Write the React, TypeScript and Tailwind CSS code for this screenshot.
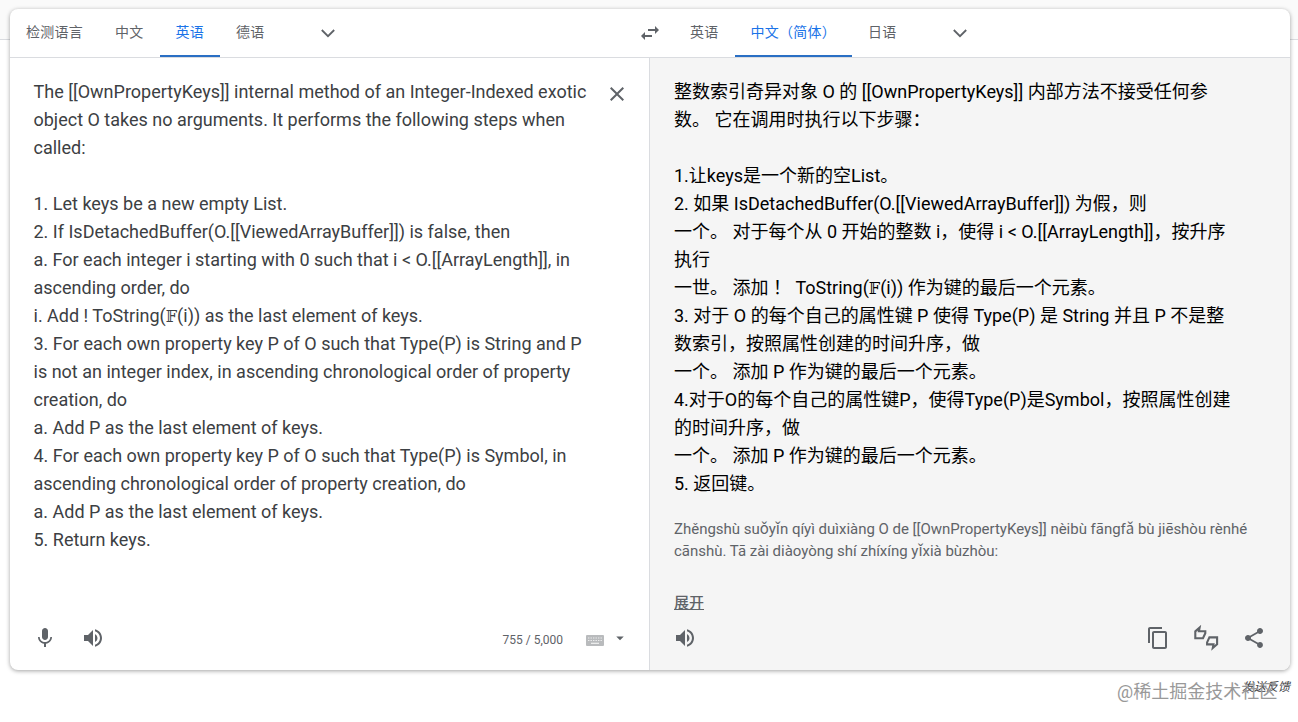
import type { ReactNode } from 'react';
import {
  MdArrowDropDown,
  MdClose,
  MdContentCopy,
  MdMic,
  MdShare,
  MdSwapHoriz,
  MdVolumeUp,
} from 'react-icons/md';

const fieldSymbol = <span className="font-['DejaVu_Serif',serif] text-base leading-none">𝔽</span>;

const sourceLines: ReactNode[] = [
  'The [[OwnPropertyKeys]] internal method of an Integer-Indexed exotic',
  'object O takes no arguments. It performs the following steps when',
  'called:',
  '',
  '1. Let keys be a new empty List.',
  '2. If IsDetachedBuffer(O.[[ViewedArrayBuffer]]) is false, then',
  'a. For each integer i starting with 0 such that i < O.[[ArrayLength]], in',
  'ascending order, do',
  <>i. Add ! ToString({fieldSymbol}(i)) as the last element of keys.</>,
  '3. For each own property key P of O such that Type(P) is String and P',
  'is not an integer index, in ascending chronological order of property',
  'creation, do',
  'a. Add P as the last element of keys.',
  '4. For each own property key P of O such that Type(P) is Symbol, in',
  'ascending chronological order of property creation, do',
  'a. Add P as the last element of keys.',
  '5. Return keys.',
];

const targetLines: ReactNode[] = [
  '整数索引奇异对象 O 的 [[OwnPropertyKeys]] 内部方法不接受任何参',
  '数。 它在调用时执行以下步骤：',
  '',
  '1.让keys是一个新的空List。',
  '2. 如果 IsDetachedBuffer(O.[[ViewedArrayBuffer]]) 为假，则',
  '一个。 对于每个从 0 开始的整数 i，使得 i < O.[[ArrayLength]]，按升序',
  '执行',
  <>
    一世。 添加<span className="font-['Noto_Sans_CJK_TC',sans-serif] leading-none">！</span>
    {'  '}ToString({fieldSymbol}(i)) 作为键的最后一个元素。
  </>,
  '3. 对于 O 的每个自己的属性键 P 使得 Type(P) 是 String 并且 P 不是整',
  '数索引，按照属性创建的时间升序，做',
  '一个。 添加 P 作为键的最后一个元素。',
  '4.对于O的每个自己的属性键P，使得Type(P)是Symbol，按照属性创建',
  '的时间升序，做',
  '一个。 添加 P 作为键的最后一个元素。',
  '5. 返回键。',
];

const pinyinLines = [
  'Zhěngshù suǒyǐn qíyì duìxiàng O de [[OwnPropertyKeys]] nèibù fāngfǎ bù jiēshòu rènhé',
  'cānshù. Tā zài diàoyòng shí zhíxíng yǐxià bùzhòu:',
];

function LanguageTab({ label, active = false }: { label: string; active?: boolean }) {
  return (
    <button
      className={`h-12 shrink-0 whitespace-nowrap border-b-2 px-4 text-sm tracking-[0.25px] ${
        active ? 'border-[#2a6fc4] text-[#1a73e8]' : 'border-transparent text-[#5f6368]'
      }`}
    >
      {label}
    </button>
  );
}

function Lines({ lines }: { lines: ReactNode[] }) {
  return (
    <>
      {lines.map((line, i) => (
        <p key={i} className="h-7 whitespace-pre text-lg leading-7">
          {line}
        </p>
      ))}
    </>
  );
}

function IconButton({ label, children }: { label: string; children: ReactNode }) {
  return (
    <button
      aria-label={label}
      className="flex size-12 shrink-0 items-center justify-center text-[#5f6368]"
    >
      {children}
    </button>
  );
}

function ChevronIcon() {
  return (
    <svg width="24" height="24" viewBox="0 0 24 24" fill="none" stroke="currentColor" strokeWidth="1.8">
      <path d="M5.8 9l6.2 6.2L18.2 9" />
    </svg>
  );
}

function RateIcon() {
  return (
    <svg width="26" height="26" viewBox="0 0 26 26" fill="none" stroke="currentColor" strokeWidth="2.1">
      <path d="M2.3 6.4L6.6 2.6L5.9 6.2H12.3V8.2L10 13.2H2.3z" />
      <path d="M24.1 19.2L19.8 23L20.5 19.4H14.1V17.4L16.4 12.4H24.1z" />
    </svg>
  );
}

function KeyboardIcon() {
  return (
    <svg width="18" height="11" viewBox="0 0 18 11">
      <rect width="18" height="11" rx="1" fill="#b9bbbd" />
      <path
        d="M2 3h14M2 5.5h14"
        stroke="#fff"
        strokeOpacity="0.75"
        strokeWidth="1.2"
        strokeDasharray="1.4 1.1"
      />
      <path d="M5 8.3h8" stroke="#fff" strokeOpacity="0.8" strokeWidth="1.2" />
    </svg>
  );
}

export default function App() {
  return (
    <div className="relative h-[722px] w-[1298px] overflow-hidden bg-white font-['Roboto','Noto_Sans_CJK_SC',sans-serif]">
      <div className="h-10 border-b border-[#dadce0] bg-[#fafafa]" />
      <main className="relative -mt-[31px] ml-2.5 flex h-[661px] w-[1280px] flex-col overflow-hidden rounded-lg bg-white shadow-[0_1px_4px_rgba(0,0,0,0.37)]">
        <header className="flex h-[49px] shrink-0 border-b border-[#dadce0]">
          <div className="flex w-[616px] items-start">
            <LanguageTab label="检测语言" />
            <LanguageTab label="中文" />
            <LanguageTab label="英语" active />
            <LanguageTab label="德语" />
            <div className="ml-[23px]">
              <IconButton label="更多源语言">
                <ChevronIcon />
              </IconButton>
            </div>
          </div>
          <IconButton label="切换语言">
            <MdSwapHoriz size={24} />
          </IconButton>
          <div className="flex flex-1 items-start">
            <LanguageTab label="英语" />
            <LanguageTab label="中文（简体）" active />
            <LanguageTab label="日语" />
            <div className="ml-[23px]">
              <IconButton label="更多目标语言">
                <ChevronIcon />
              </IconButton>
            </div>
          </div>
        </header>

        <div className="flex min-h-0 flex-1">
          <section className="flex w-[639px] flex-col text-[#3c4043]">
            <div className="flex flex-1 justify-between pl-[23.5px] pr-2 pt-5">
              <div>
                <Lines lines={sourceLines} />
              </div>
              <div className="-mt-2">
                <IconButton label="清除">
                  <MdClose size={24} />
                </IconButton>
              </div>
            </div>
            <footer className="flex h-14 items-start pl-[11px] pr-5">
              <IconButton label="语音输入">
                <MdMic size={24} />
              </IconButton>
              <IconButton label="朗读原文">
                <MdVolumeUp size={24} />
              </IconButton>
              <div className="ml-auto flex h-12 items-center pt-1 text-xs text-[#5f6368]">
                <span className="mr-[23px]">755 / 5,000</span>
                <KeyboardIcon />
                <MdArrowDropDown size={18} className="-mt-1 ml-[7px]" />
              </div>
            </footer>
          </section>

          <section className="flex flex-1 flex-col border-l border-[#dadce0] bg-[#f5f5f5]">
            <div className="flex-1 pl-6 pt-5">
              <div className="text-black">
                <Lines lines={targetLines} />
              </div>
              <div className="mt-5 text-[15px] leading-[22px] tracking-[-0.02px] text-[#5f6368]">
                {pinyinLines.map((line) => (
                  <p key={line} className="whitespace-pre">
                    {line}
                  </p>
                ))}
              </div>
              <button className="mt-[31px] block text-[15px] font-medium leading-[21px] text-[#5f6368] underline">
                展开
              </button>
            </div>
            <footer className="flex h-14 items-start pl-[11px] pr-3">
              <IconButton label="朗读译文">
                <MdVolumeUp size={24} />
              </IconButton>
              <div className="ml-auto flex">
                <IconButton label="复制译文">
                  <MdContentCopy size={24} />
                </IconButton>
                <IconButton label="为译文评分">
                  <RateIcon />
                </IconButton>
                <IconButton label="分享">
                  <MdShare size={24} />
                </IconButton>
              </div>
            </footer>
          </section>
        </div>
      </main>

      <a className="absolute right-2 top-[679px] text-xs italic text-[#3c4043]">
        发送反馈
      </a>
      <span className="absolute left-[1117px] top-[680px] whitespace-nowrap text-lg leading-6 text-[#999]">
        @稀土掘金技术社区
      </span>
    </div>
  );
}
